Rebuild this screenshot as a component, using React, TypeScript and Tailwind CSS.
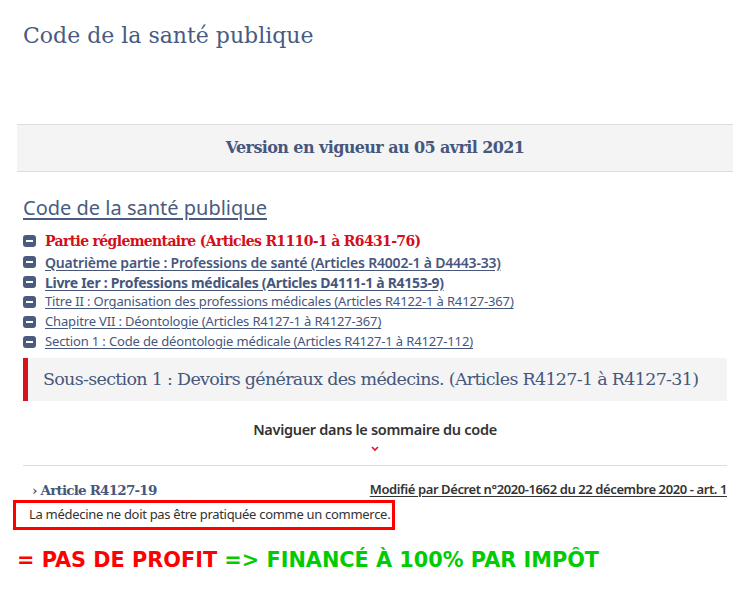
const slab = { fontFamily: '"DejaVu Serif", "Liberation Serif", serif' };

const items = [
  { label: "Quatrième partie : Professions de santé (Articles R4002-1 à D4443-33)", cls: "text-[14px] font-semibold tracking-[-0.2px]" },
  { label: "Livre Ier : Professions médicales (Articles D4111-1 à R4153-9)", cls: "text-[14px] font-bold tracking-[-0.3px]" },
  { label: "Titre II : Organisation des professions médicales (Articles R4122-1 à R4127-367)", cls: "text-[13px] tracking-[-0.15px]" },
  { label: "Chapitre VII : Déontologie (Articles R4127-1 à R4127-367)", cls: "text-[13px] tracking-[-0.15px]" },
  { label: "Section 1 : Code de déontologie médicale (Articles R4127-1 à R4127-112)", cls: "text-[13px] tracking-[-0.15px]" },
];

function Minus() {
  return (
    <span className="flex h-[12px] w-[13px] shrink-0 items-center justify-center rounded-[3px] bg-[#4b5b80]">
      <span className="h-[2px] w-[7px] bg-white" />
    </span>
  );
}

export default function App() {
  return (
    <div className="h-[600px] w-[750px] bg-white text-[#333]" style={{ fontFamily: '"Noto Sans", "Open Sans", sans-serif' }}>
      <div className="px-[23px] pt-[20px]">
        <h1 className="text-[22px] font-light leading-[32px] text-[#485b82]" style={slab}>Code de la santé publique</h1>
      </div>

      <div className="mx-[17px] mt-[72px] flex h-[48px] items-center justify-center border-y border-[#dcdcdc] bg-[#f4f4f4]">
        <span className="text-[16px] font-bold tracking-[-0.6px] text-[#46577d]" style={slab}>Version en vigueur au 05 avril 2021</span>
      </div>

      <div className="px-[23px]">
        <h2 className="mt-[22px] text-[20px] leading-[28px] text-[#4a5c80] underline underline-offset-[3px]">Code de la santé publique</h2>

        <div className="mt-[8px] flex items-center gap-[9px] h-[22px]">
          <Minus />
          <span className="text-[14px] font-bold tracking-[-0.65px] text-[#d40e1a]" style={slab}>Partie réglementaire (Articles R1110-1 à R6431-76)</span>
        </div>
        {items.map((it) => (
          <div key={it.label} className="flex h-[20px] items-center gap-[9px]">
            <Minus />
            <span className={`${it.cls} text-[#46577d] underline underline-offset-2`}>{it.label}</span>
          </div>
        ))}

        <div className="mt-[6px] flex h-[43px] items-center border-l-[5px] border-[#d7141e] bg-[#f4f4f4] pl-[15px]">
          <span className="text-[17.5px] tracking-[-0.7px] text-[#46577d]" style={slab}>Sous-section 1 : Devoirs généraux des médecins. (Articles R4127-1 à R4127-31)</span>
        </div>

        <div className="mt-[18px] flex flex-col items-center">
          <span className="text-[14.5px] font-semibold tracking-[-0.3px] text-[#333]">Naviguer dans le sommaire du code</span>
          <svg width="8" height="6" viewBox="0 0 8 6" className="mt-[5px]">
            <path d="M1 1 L4 4 L7 1" stroke="#e0103a" strokeWidth="1.6" fill="none" />
          </svg>
        </div>

        <div className="mt-[13px] border-t border-[#ddd]" />

        <div className="mt-[14px] flex items-center justify-between">
          <span className="pl-[9px] text-[13.5px] font-bold tracking-[-0.8px] text-[#46577d]" style={slab}>› Article R4127-19</span>
          <span className="text-[13px] font-semibold tracking-[-0.4px] text-[#333] underline underline-offset-2">Modifié par Décret n°2020-1662 du 22 décembre 2020 - art. 1</span>
        </div>
      </div>

      <div className="ml-[13px] mt-0 flex h-[30px] w-[382px] items-center border-[3px] border-[#ff0000] pl-[13px]">
        <span className="text-[13px] tracking-[-0.3px] text-[#333]">La médecine ne doit pas être pratiquée comme un commerce.</span>
      </div>

      <div className="mt-[15px] pl-[17px] text-[20.8px] font-bold" style={{ fontFamily: '"DejaVu Sans", Verdana, sans-serif' }}>
        <span className="text-[#ff0000]">= PAS DE PROFIT </span>
        <span className="text-[#00cc00]">=&gt; FINANCÉ À 100% PAR IMPÔT</span>
      </div>
    </div>
  );
}
